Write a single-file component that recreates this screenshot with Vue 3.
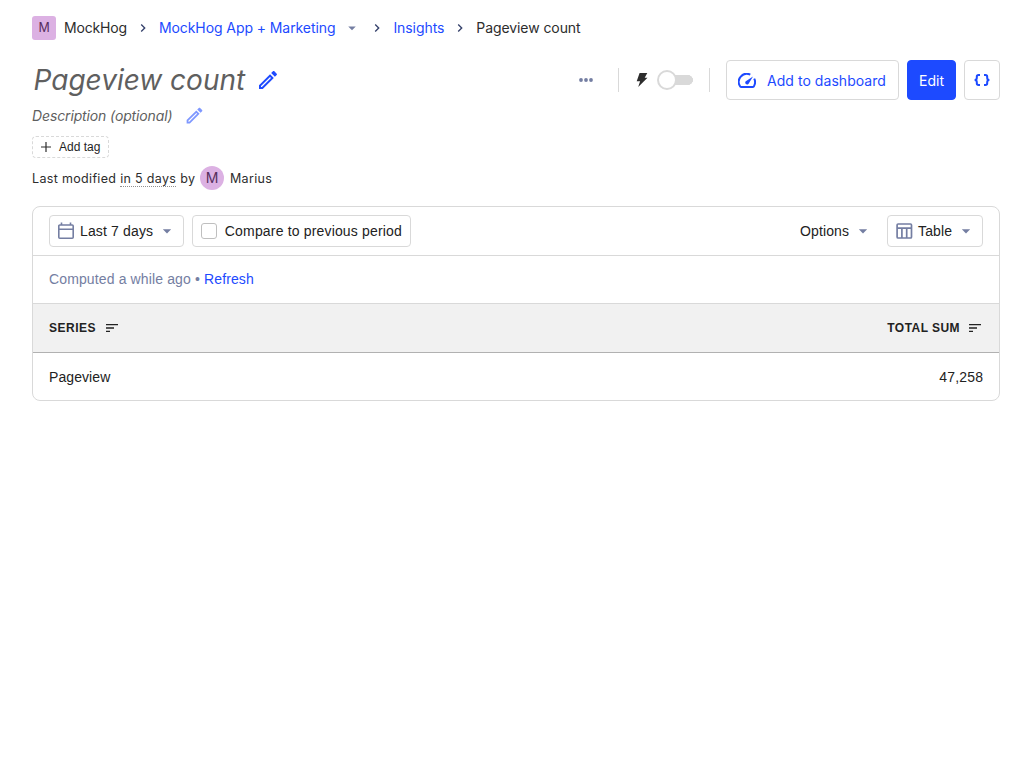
<script setup>
const sortPath = 'M3 18h6v-2H3v2zM3 6v2h18V6H3zm0 7h12v-2H3v2z'
const caretPath = 'M7 10l5 5 5-5H7z'
const chevronPath = 'M8.59 16.59 13.17 12 8.59 7.41 10 6l6 6-6 6z'
const editPath =
  'M14.06 9.02l.92.92L5.92 19H5v-.92l9.06-9.06zM17.66 3c-.25 0-.51.1-.7.29l-1.83 1.83 3.75 3.75 1.83-1.83c.39-.39.39-1.02 0-1.41l-2.34-2.34c-.2-.2-.45-.29-.71-.29zm-3.6 3.19L3 17.25V21h3.75L17.81 9.94l-3.75-3.75z'
</script>

<template>
  <main class="scene">
    <nav class="crumbs">
      <span class="lettermark">M</span>
      <span class="org">MockHog</span>
      <svg class="chev" viewBox="0 0 24 24"><path :d="chevronPath" /></svg>
      <a>MockHog App + Marketing</a>
      <svg class="crumb-caret" viewBox="0 0 24 24"><path :d="caretPath" /></svg>
      <svg class="chev" viewBox="0 0 24 24"><path :d="chevronPath" /></svg>
      <a>Insights</a>
      <svg class="chev" viewBox="0 0 24 24"><path :d="chevronPath" /></svg>
      <span>Pageview count</span>
    </nav>

    <header class="title-row">
      <h1>Pageview count</h1>
      <svg class="edit" viewBox="0 0 24 24"><path :d="editPath" /></svg>
      <div class="actions">
        <svg class="more" viewBox="0 0 20 20"><circle cx="5" cy="10" r="1.9" /><circle cx="10" cy="10" r="1.9" /><circle cx="15" cy="10" r="1.9" /></svg>
        <i class="divider d1"></i>
        <svg class="bolt" viewBox="0 0 12 14"><path d="M3.600 0H11.300L8.700 4.700H11.500L2.200 14 4.100 8.200H.7z" /></svg>
        <span class="switch"><span class="knob"></span></span>
        <i class="divider d2"></i>
        <button class="btn dash">
          <svg viewBox="0 0 18 15"><path class="line" d="M12.300 1.700A8 8 0 0 0 2.100 13.300Q2.600 14 3.400 14H14.600Q15.400 14 15.900 13.300A8 8 0 0 0 16.200 5.600" /><path d="M15 3.600 10.900 10.200A1.900 1.900 0 1 1 8.200 7.900z" /></svg>
          <span>Add to dashboard</span>
        </button>
        <button class="btn primary"><span>Edit</span></button>
        <button class="btn code">
          <svg viewBox="0 0 16 12"><path class="line" d="M6 1H4.500Q2.800 1 2.800 2.700V4Q2.800 6 .6 6 2.800 6 2.800 8V9.300Q2.800 11 4.500 11H6M10 1H11.500Q13.200 1 13.200 2.700V4Q13.200 6 15.400 6 13.200 6 13.200 8V9.300Q13.200 11 11.500 11H10" /></svg>
        </button>
      </div>
    </header>

    <div class="desc"><em>Description (optional)</em><svg viewBox="0 0 24 24"><path :d="editPath" /></svg></div>

    <div class="tag">
      <svg viewBox="0 0 10 10"><path d="M5 0v10M0 5h10" /></svg>
      <span>Add tag</span>
    </div>

    <div class="modified">
      <span class="m1">Last modified <span class="dotted">in 5 days</span> by</span>
      <span class="avatar">M</span>
      <span class="who">Marius</span>
    </div>

    <section class="card">
      <div class="toolbar">
        <button class="ctl date">
          <svg class="ico" viewBox="0 0 20 20"><path fill="none" stroke="currentColor" stroke-width="1.600" d="M3.800 4h12.400a1 1 0 0 1 1 1v11.200a1 1 0 0 1-1 1H3.800a1 1 0 0 1-1-1V5a1 1 0 0 1 1-1zM2.800 8.200h14.400M5.500 1.500v2.500M14.500 1.500v2.500" /></svg>
          <span>Last 7 days</span>
          <svg class="caret" viewBox="0 0 24 24"><path :d="caretPath" /></svg>
        </button>
        <label class="ctl compare"><i class="box"></i><span>Compare to previous period</span></label>
        <div class="options">
          <span>Options</span>
          <svg class="caret" viewBox="0 0 24 24"><path :d="caretPath" /></svg>
        </div>
        <button class="ctl table-btn">
          <svg class="ico" viewBox="0 0 20 20"><path fill="none" stroke="currentColor" stroke-width="1.700" d="M4.100 3h12.400a1 1 0 0 1 1 1v12a1 1 0 0 1-1 1H4.100a1 1 0 0 1-1-1V4a1 1 0 0 1 1-1zM3.100 7.200h14.400M7.900 7.200v9.800M12.700 7.200v9.800" /></svg>
          <span>Table</span>
          <svg class="caret" viewBox="0 0 24 24"><path :d="caretPath" /></svg>
        </button>
      </div>
      <div class="computed"><span>Computed a while ago • <a>Refresh</a></span></div>
      <div class="row head">
        <span class="th">SERIES <svg viewBox="0 0 24 24"><path :d="sortPath" /></svg></span>
        <span class="th">TOTAL SUM <svg viewBox="0 0 24 24"><path :d="sortPath" /></svg></span>
      </div>
      <div class="row"><span class="name">Pageview</span><span class="num">47,258</span></div>
    </section>
  </main>
</template>

<style>
body { background: #fff; }
</style>

<style scoped>
* { box-sizing: border-box; }
.scene { padding: 16px 32px; font-family: Inter, sans-serif; font-size: 14px; line-height: 24px; color: #2d2d2d; white-space: nowrap; }
svg { display: block; flex: none; fill: currentColor; }
.line { fill: none; stroke: currentColor; stroke-width: 2; }
a { color: #1d4aff; }
.crumbs { display: flex; align-items: center; height: 24px; letter-spacing: -0.08px; }
.lettermark { width: 24px; height: 24px; border-radius: 3px; background: #dcb1e3; color: #572e5e; text-align: center; font-size: 12.500px; margin-right: 8px; }
.org { letter-spacing: -0.170px; }
.chev { width: 16px; height: 16px; margin: 0 8px; color: #35416b; }
.crumb-caret { width: 18px; height: 18px; margin-left: 8px; color: #747ea2; }
.title-row { display: flex; align-items: center; height: 40px; margin-top: 20px; }
h1 { margin: 0; padding-left: 1.500px; font-size: 28px; line-height: 40px; font-weight: 400; font-style: italic; color: #5f5f5f; width: 224px; }
.edit { width: 24px; height: 24px; color: #1d4aff; }
.actions { display: flex; align-items: center; margin-left: auto; }
.more { width: 20px; height: 20px; color: #747ea2; margin-right: 22px; }
.divider { width: 1px; height: 24px; background: #d9d9d9; }
.d1 { margin-right: 17px; }
.bolt { width: 12px; height: 14px; margin-right: 9px; color: #2d2d2d; }
.switch { width: 36px; height: 20px; margin-right: 16px; display: flex; align-items: center; background: linear-gradient(#d9d9d9, #d9d9d9) 10px 5px / 21px 10px no-repeat, radial-gradient(circle at 31px 10px, #d9d9d9 4.700px, transparent 5.200px); }
.knob { width: 20px; height: 20px; border-radius: 50%; border: 2px solid #d9d9d9; background: #fff; }
.d2 { margin-right: 16px; }
.btn { height: 40px; border: 1px solid #d9d9d9; border-radius: 4px; background: #fff; color: #1d4aff; font: 14px/24px Inter, sans-serif; display: flex; align-items: center; justify-content: center; padding: 0; }
.btn span { padding-top: 2px; }
.dash { width: 173px; margin-right: 8px; justify-content: flex-start; padding-left: 11px; }
.dash svg { width: 18px; height: 15px; margin-right: 11px; }
.dash span { letter-spacing: 0.050px; }
.primary { width: 49px; margin-right: 8px; background: #1d4aff; border-color: #1d4aff; color: #fff; }
.code { width: 36px; }
.code svg { width: 16px; height: 12px; }
.desc { display: flex; align-items: center; height: 24px; margin-top: 4px; color: #5f5f5f; }
.desc em { width: 151.500px; letter-spacing: -0.130px; }
.desc svg { width: 21px; height: 21px; margin-bottom: 1px; color: #7f98ff; }
.tag { width: 77px; height: 22px; margin-top: 8px; border: 1px dashed #d9d9d9; border-radius: 4px; display: flex; align-items: center; padding-left: 8px; font: 12px/20px "Liberation Sans", sans-serif; color: #1f1f1f; }
.tag svg { width: 10px; height: 10px; margin-right: 8px; stroke: #2d2d2d; stroke-width: 1.200; }
.modified { display: flex; align-items: center; height: 24px; margin-top: 8px; font-size: 12.500px; letter-spacing: 0.330px; }
.m1 { width: 168px; padding-top: 2px; }
.who { padding-top: 2px; }
.dotted { display: inline-block; line-height: 15px; border-bottom: 1px dotted #8f8f8f; }
.avatar { width: 24px; height: 24px; margin-right: 6px; border-radius: 50%; background: #dcb1e3; color: #572e5e; text-align: center; font-size: 14px; letter-spacing: 0; }
.card { margin-top: 16px; border: 1px solid #d9d9d9; border-radius: 8px; overflow: hidden; font-family: "Liberation Sans", sans-serif; color: #222; }
.toolbar { display: flex; align-items: center; height: 49px; padding: 0 16px; border-bottom: 1px solid #d9d9d9; }
.ctl { height: 32px; display: flex; align-items: center; border: 1px solid #d9d9d9; border-radius: 4px; background: #fff; color: #222; padding: 0 6px; font: 14px/24px "Liberation Sans", sans-serif; letter-spacing: 0.150px; }
.ico { width: 20px; height: 20px; margin-right: 4px; color: #747ea2; }
.caret { width: 20px; height: 20px; margin-left: auto; color: #747ea2; }
.date { width: 135px; margin-right: 8px; }
.compare { width: 219px; padding: 0 8px; letter-spacing: 0.170px; }
.box { width: 16px; height: 16px; border: 1px solid #bfbfbf; border-radius: 3px; margin-right: 8px; }
.options { width: 73px; margin-left: auto; margin-right: 14px; display: flex; align-items: center; letter-spacing: 0.120px; }
.table-btn { width: 96px; }
.computed { height: 48px; padding: 11px 16px; border-bottom: 1px solid #d9d9d9; color: #747ea2; letter-spacing: 0.130px; }
.row { height: 47px; padding: 1px 16px 0; display: flex; align-items: center; justify-content: space-between; }
.name { letter-spacing: 0.080px; }
.num { letter-spacing: 0.180px; margin-right: -0.180px; }
.head { height: 49px; padding-top: 0; background: #f1f1f1; border-bottom: 1px solid #b1b1b1; }
.th { display: flex; align-items: center; font-size: 12px; font-weight: 700; letter-spacing: 0.500px; }
.th svg { width: 16px; height: 16px; margin-left: 8px; }
.th:last-child { letter-spacing: 0.450px; }
.th:last-child svg { margin-left: 7px; }
</style>
